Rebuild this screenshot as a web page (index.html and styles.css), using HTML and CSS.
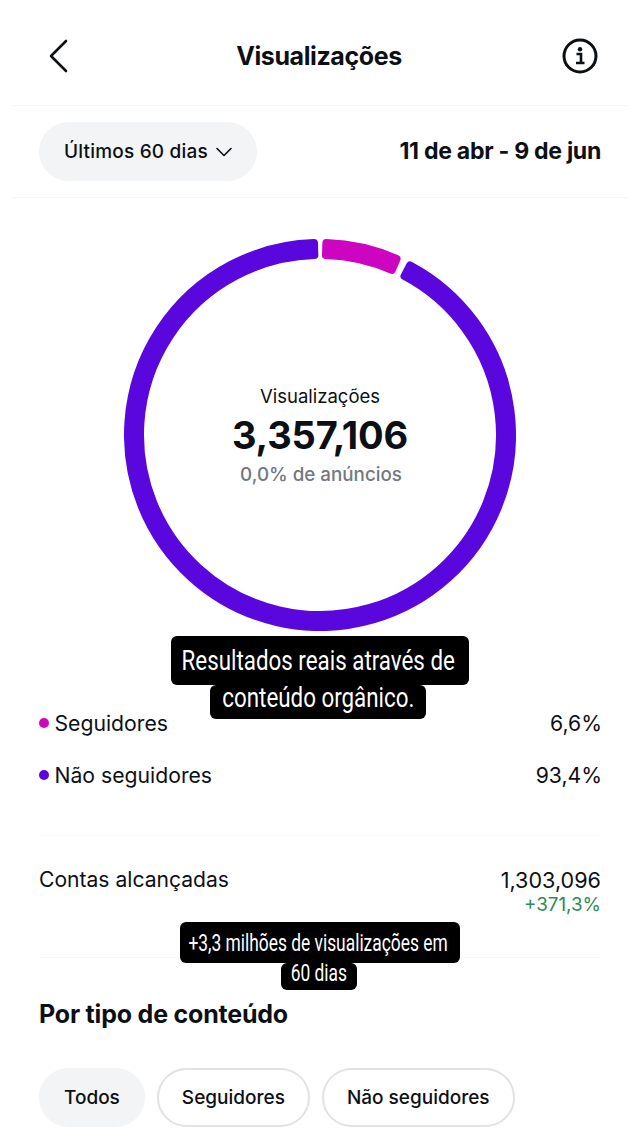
FILE: index.html
```html
<!DOCTYPE html>
<html lang="pt">
<head>
<meta charset="utf-8">
<title>Visualizações</title>
<link rel="stylesheet" href="styles.css">
</head>
<body>
<main class="page">
  <header class="topbar">
    <svg class="back" width="24" height="36" viewBox="0 0 24 36"><path d="M20 3 L5 18 L20 33"/></svg>
    <h1 class="title">Visualizações</h1>
    <svg class="info" width="36" height="36" viewBox="0 0 36 36">
      <circle class="info-ring" cx="18" cy="18" r="16"/>
      <circle class="info-dot" cx="18" cy="11.2" r="2.2"/>
      <path class="info-i" d="M14.5 16 H19 V24.5 M14 25 H22.5"/>
    </svg>
  </header>

  <section class="filter-row">
    <div class="pill">
      <span>Últimos 60 dias</span>
      <svg class="chev" width="16" height="10" viewBox="0 0 16 10"><path d="M1 1.5 L8 8.5 L15 1.5"/></svg>
    </div>
    <div class="range">11 de abr - 9 de jun</div>
  </section>

  <section class="chart">
    <svg class="donut" width="392" height="392" viewBox="-196 -196 392 392">
      <path class="seg-blue" d="M90.14 -169.53 A192 192 0 1 1 -6.03 -191.91 L-5.65 -179.91 A180 180 0 1 0 84.50 -158.93 Z"/>
      <path class="seg-pink" d="M6.37 -191.89 A192 192 0 0 1 76.56 -176.08 L71.78 -165.07 A180 180 0 0 0 5.97 -179.90 Z"/>
    </svg>
    <div class="chart-center">
      <div class="chart-label">Visualizações</div>
      <div class="chart-value">3,357,106</div>
      <div class="chart-sub">0,0% de anúncios</div>
    </div>
  </section>

  <section class="legend">
    <div class="legend-row">
      <span class="legend-name"><i class="dot dot-pink"></i>Seguidores</span>
      <span>6,6%</span>
    </div>
    <div class="legend-row">
      <span class="legend-name"><i class="dot dot-blue"></i>Não seguidores</span>
      <span>93,4%</span>
    </div>
  </section>

  <section class="reach">
    <span>Contas alcançadas</span>
    <div class="reach-values">
      <div>1,303,096</div>
      <div class="growth">+371,3%</div>
    </div>
  </section>

  <section class="types">
    <h2 class="types-title">Por tipo de conteúdo</h2>
    <div class="chips">
      <span class="chip chip-active">Todos</span>
      <span class="chip">Seguidores</span>
      <span class="chip">Não seguidores</span>
    </div>
  </section>

  <div class="caption caption-one">
    <span class="cap-line cap-a"><b>Resultados reais através de</b></span>
    <span class="cap-line cap-b"><b>conteúdo orgânico.</b></span>
  </div>
  <div class="caption caption-two">
    <span class="cap-line cap-c"><b>+3,3 milhões de visualizações em</b></span>
    <span class="cap-line cap-d"><b>60 dias</b></span>
  </div>
</main>
</body>
</html>
```
FILE: styles.css
```css
* { box-sizing: border-box; }
html, body { margin: 0; padding: 0; background: #fff; }
body { font-family: Inter, Roboto, "Liberation Sans", sans-serif; color: #0c1014; }
.page { position: relative; width: 640px; height: 1138px; overflow: hidden; }

.topbar {
  height: 106px;
  margin: 0 12px;
  padding: 6px 30px 0 34px;
  border-bottom: 1px solid #f6f6f6;
  display: flex;
  align-items: center;
  justify-content: space-between;
  position: relative;
}
.back path { fill: none; stroke: #0c1014; stroke-width: 2.6; stroke-linecap: round; stroke-linejoin: round; }
.title { margin: 0 0 0 6px; font-size: 25px; font-weight: 700; letter-spacing: -0.4px; }
.info-ring { fill: none; stroke: #0c1014; stroke-width: 3; }
.info-dot { fill: #0c1014; }
.info-i { fill: none; stroke: #0c1014; stroke-width: 2.6; }

.filter-row {
  height: 92px;
  margin: 0 12px;
  padding: 0 27px;
  border-bottom: 1px solid #f6f6f6;
  display: flex;
  align-items: center;
  justify-content: space-between;
}
.pill {
  width: 218px;
  height: 59px;
  border-radius: 30px;
  background: #f3f4f6;
  display: flex;
  align-items: center;
  justify-content: center;
  gap: 8px;
  font-size: 19px;
  letter-spacing: 0.2px;
  font-weight: 500;
}
.chev path { fill: none; stroke: #0c1014; stroke-width: 1.6; stroke-linecap: round; stroke-linejoin: round; }
.range { font-size: 23.1px; line-height: 26px; padding-bottom: 2px; font-weight: 700; letter-spacing: -0.3px; }

.chart {
  margin-top: 41px;
  display: grid;
  justify-content: center;
  align-items: center;
}
.donut, .chart-center { grid-area: 1 / 1; }
.donut { display: block; }
.seg-blue, .seg-pink { stroke-width: 8; stroke-linejoin: round; }
.seg-blue { fill: #5a07de; stroke: #5a07de; }
.seg-pink { fill: #cd05c1; stroke: #cd05c1; }
.chart-center { text-align: center; padding-top: 2px; }
.chart-label { font-size: 18.5px; line-height: 30px; }
.chart-value { font-size: 38px; line-height: 48px; font-weight: 700; letter-spacing: -0.2px; }
.chart-sub { font-size: 18.8px; line-height: 32px; font-weight: 500; color: #737780; padding-left: 2px; }

.legend { margin: 66px 38px 0 39px; font-size: 21.2px; }
.legend-row {
  height: 52px;
  display: flex;
  align-items: center;
  justify-content: space-between;
}
.legend-name { display: flex; align-items: center; gap: 5.5px; }
.dot { width: 10px; height: 10px; border-radius: 50%; }
.dot-pink { background: #cd05c1; }
.dot-blue { background: #5a07de; }

.reach {
  margin: 34px 39px 0;
  height: 123px;
  padding-top: 31px;
  border-top: 1px solid #f6f6f6;
  border-bottom: 1px solid #f6f6f6;
  display: flex;
  justify-content: space-between;
  font-size: 21.1px;
  line-height: 26px;
}
.reach-values { text-align: right; font-size: 21.6px; }
.growth { font-size: 18.8px; line-height: 24px; color: #2e8b57; }

.types { margin: 0 39px; }
.types-title { margin: 38px 0 0; font-size: 25px; line-height: 36px; font-weight: 700; letter-spacing: -0.2px; }
.chips { margin-top: 36px; display: flex; gap: 12px; }
.chip {
  height: 59px;
  padding: 0 23px;
  border: 2px solid #e2e2e4;
  border-radius: 30px;
  display: flex;
  align-items: center;
  font-size: 19px;
  font-weight: 500;
}
.chip-active { background: #f3f4f6; border-color: #f3f4f6; }

.caption {
  position: absolute;
  left: 0;
  width: 640px;
  display: flex;
  flex-direction: column;
  align-items: center;
  font-family: Roboto, "Liberation Sans", sans-serif;
  color: #fff;
}
.cap-line {
  background: #000;
  border-radius: 6px;
  display: flex;
  align-items: center;
  justify-content: center;
  white-space: nowrap;
}
.cap-line b { display: block; font-weight: 400; flex: none; position: relative; }
.caption-one b { transform: scaleX(0.798); }
.caption-two b { transform: scaleX(0.724); }
.caption-one { top: 636px; font-size: 28px; }
.cap-a { width: 298px; height: 49px; }
.cap-a b { left: -2px; }
.cap-b { width: 216px; height: 34px; margin-left: -4px; }
.cap-b b { top: -5px; }
.caption-two { top: 922px; font-size: 24px; }
.cap-c { width: 280px; height: 41px; }
.cap-c b { left: -2px; }
.cap-d { width: 76px; height: 27px; margin-left: -2px; }
.cap-d b { top: -4px; }
```
